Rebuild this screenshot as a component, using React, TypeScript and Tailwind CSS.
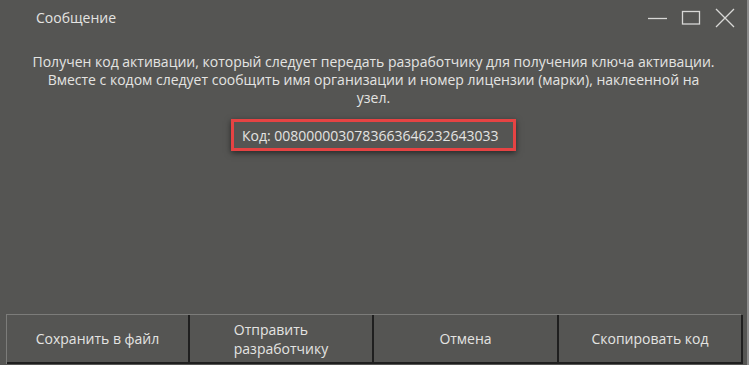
import React from "react";

const font = { fontFamily: '"Open Sans", "Noto Sans", sans-serif' };

export default function App() {
  return (
    <div
      className="relative flex h-[365px] w-[749px] flex-col overflow-hidden border-r-2 border-[#8c8c8c] bg-[#555553] text-[#e4e4e2]"
      style={font}
    >
      {/* title bar */}
      <div className="flex h-[36px] shrink-0 items-center justify-between">
        <span className="pl-[36px] text-[14px] leading-none">Сообщение</span>
        <div className="flex items-center gap-[14px] pr-[12px]">
          <svg width="20" height="20" viewBox="0 0 20 20" className="text-[#d8d8d6]">
            <line x1="1" y1="10.5" x2="20" y2="10.5" stroke="currentColor" strokeWidth="1.3" />
          </svg>
          <svg width="20" height="20" viewBox="0 0 20 20" className="text-[#d8d8d6]">
            <rect x="1.5" y="3.5" width="17" height="12.5" fill="none" stroke="currentColor" strokeWidth="1.3" />
          </svg>
          <svg width="20" height="20" viewBox="0 0 20 20" className="text-[#d8d8d6]">
            <path d="M1 1 L19 19 M19 1 L1 19" stroke="currentColor" strokeWidth="1.3" />
          </svg>
        </div>
      </div>

      {/* message */}
      <div className="flex flex-1 flex-col items-center pt-[17px]">
        <p className="px-[20px] text-center text-[14px] leading-[18px]">
          Получен код активации, который следует передать разработчику для получения ключа активации.
          <br />
          Вместе с кодом следует сообщить имя организации и номер лицензии (марки), наклеенной на
          <br />
          узел.
        </p>
        <div className="mt-[12px] flex h-[32px] w-[285px] items-center border-[3px] border-[#e64343] pl-[8px] text-[14px] shadow-[0_2px_6px_rgba(0,0,0,0.55)]">
          Код: 0080000030783663646232643033
        </div>
      </div>

      {/* buttons */}
      <div className="mx-[6px] mb-[1px] grid h-[50px] grid-cols-[183px_184px_185px_184px] border-l border-t border-[#7c7c7a] text-[14px]">
        <button className="flex items-center justify-center border-b-2 border-r-2 border-[#1f1f1f]">
          Сохранить в файл
        </button>
        <button className="flex items-center justify-center border-b-2 border-r-2 border-[#1f1f1f]">
          <span className="text-left leading-[19px]">
            Отправить
            <br />
            разработчику
          </span>
        </button>
        <button className="flex items-center justify-center border-b-2 border-r-2 border-[#1f1f1f]">
          Отмена
        </button>
        <button className="flex items-center justify-center border-b-2 border-r-2 border-[#1f1f1f]">
          Скопировать код
        </button>
      </div>
    </div>
  );
}
